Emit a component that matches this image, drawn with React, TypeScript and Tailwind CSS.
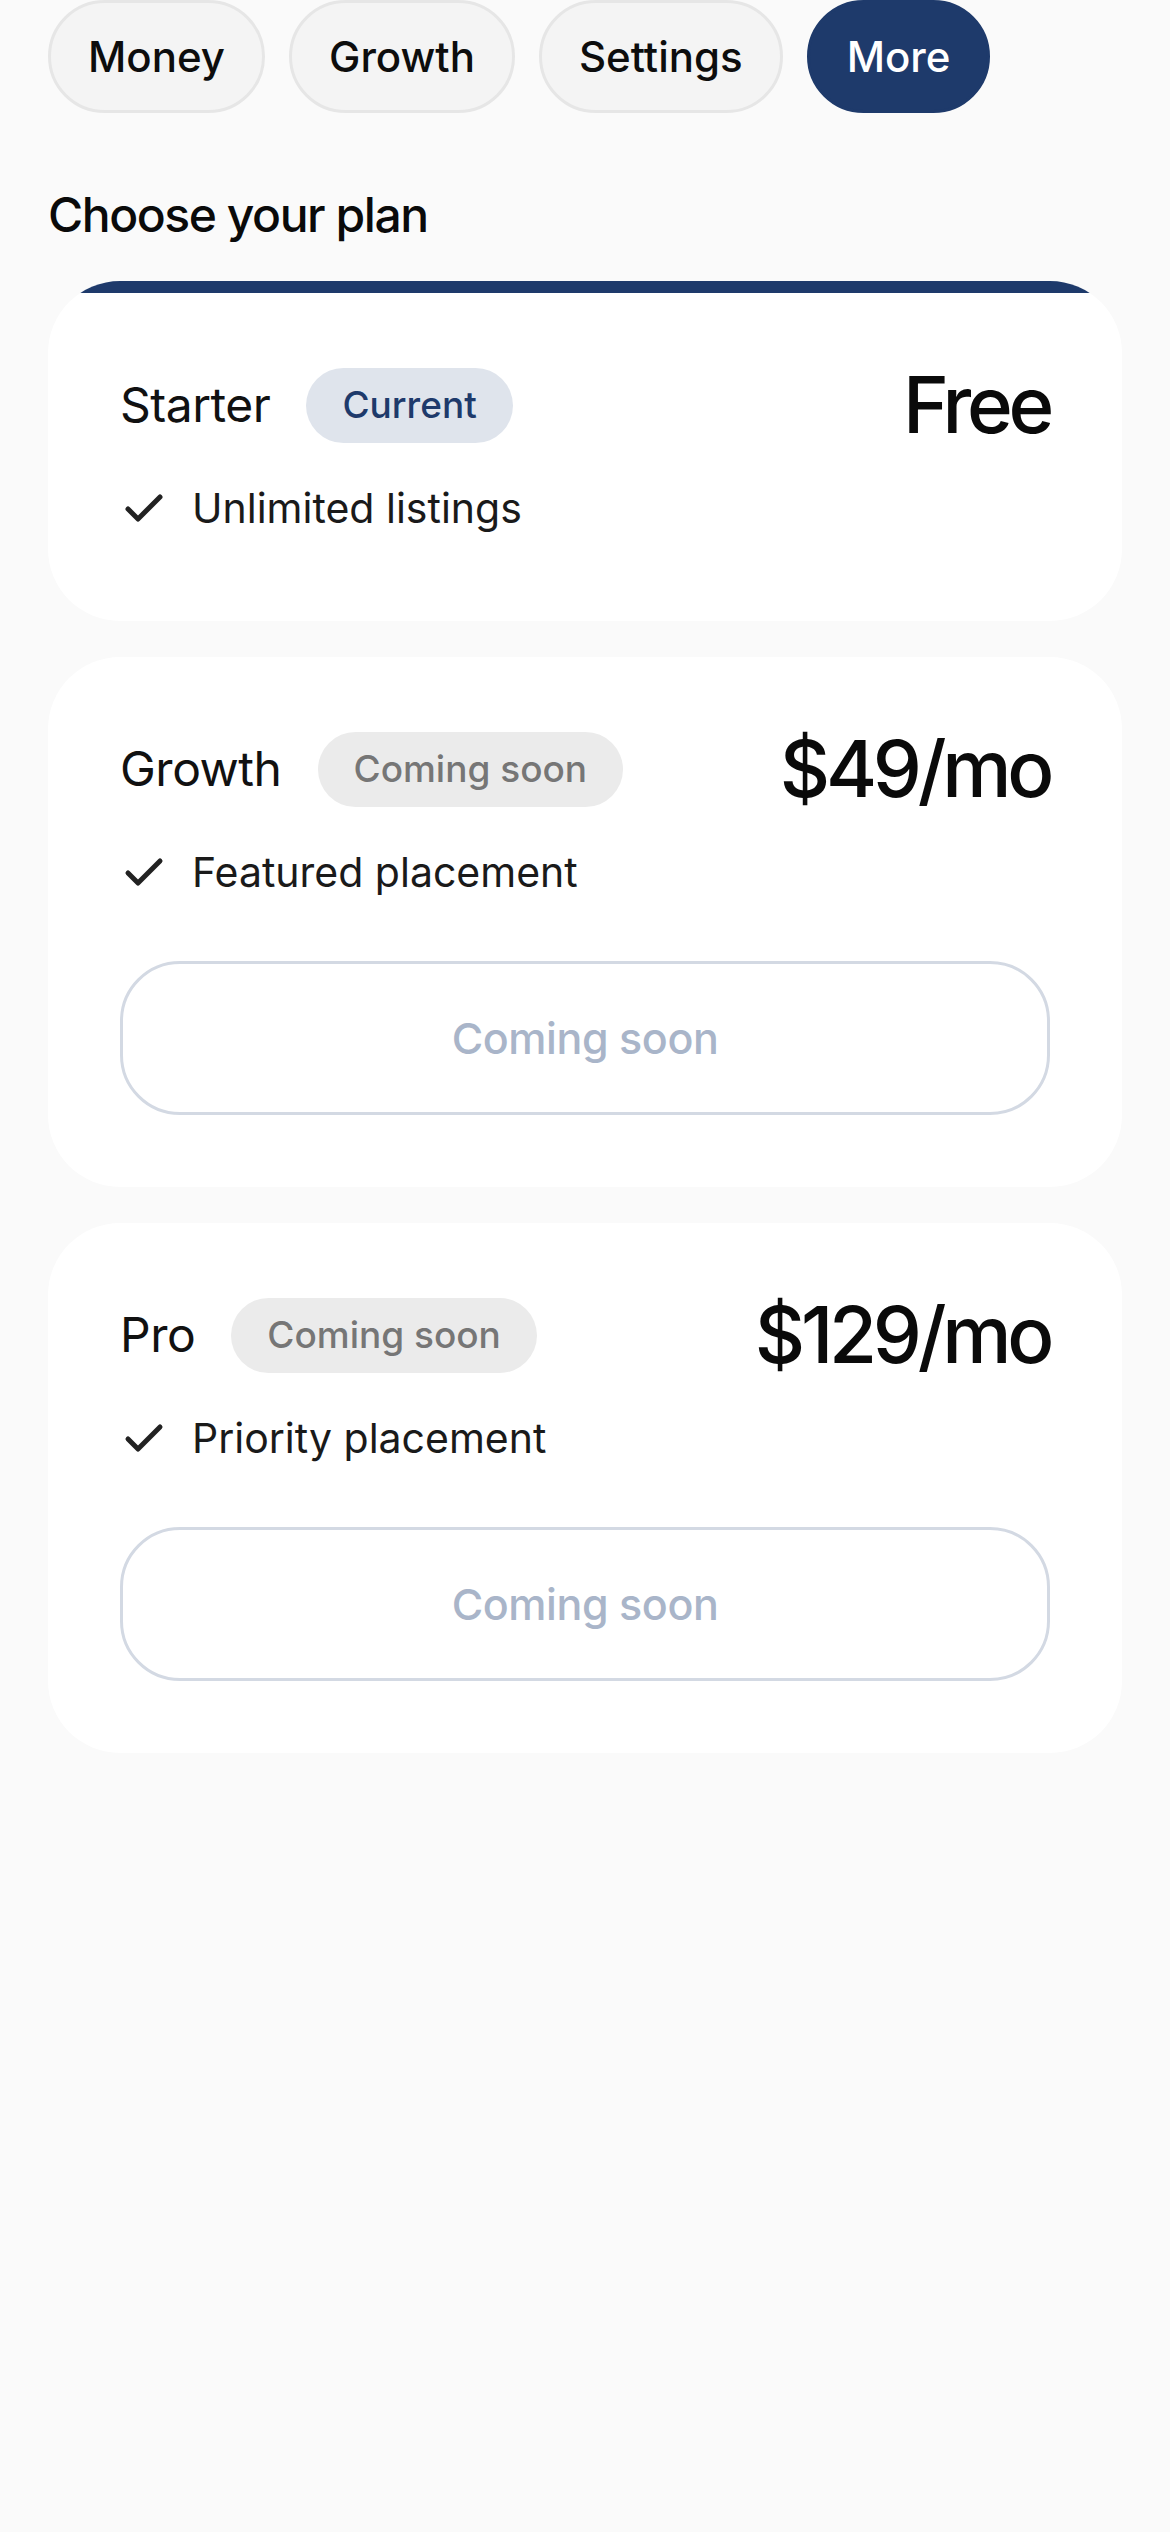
import React from "react";

const tabs = [
  { label: "Money", active: false },
  { label: "Growth", active: false },
  { label: "Settings", active: false },
  { label: "More", active: true },
];

function Check() {
  return (
    <svg width="48" height="48" viewBox="0 0 24 24" fill="none" stroke="#222222" strokeWidth="2.5" strokeLinecap="round" strokeLinejoin="round" className="shrink-0">
      <path d="M20 6 9 17l-5-5" />
    </svg>
  );
}

type Plan = {
  name: string;
  badge: string;
  current: boolean;
  price: string;
  feature: string;
};

const plans: Plan[] = [
  { name: "Starter", badge: "Current", current: true, price: "Free", feature: "Unlimited listings" },
  { name: "Growth", badge: "Coming soon", current: false, price: "$49/mo", feature: "Featured placement" },
  { name: "Pro", badge: "Coming soon", current: false, price: "$129/mo", feature: "Priority placement" },
];

function PlanCard({ plan }: { plan: Plan }) {
  return (
    <div className="overflow-hidden rounded-[72px] bg-white">
      {plan.current && <div className="h-[12px] bg-[#1e3a6b]" />}
      <div className="px-[72px] pt-[72px] pb-[72px]">
        <div className="flex h-[80px] items-center justify-between">
          <div className="flex items-center gap-[36px]">
            <span className="text-[48px] text-[#111111] tracking-[-0.01em]">{plan.name}</span>
            <span
              className={
                plan.current
                  ? "flex h-[75px] items-center rounded-full bg-[#dfe4ec] px-[36px] text-[37px] font-medium text-[#1e3a6b]"
                  : "flex h-[75px] items-center rounded-full bg-[#ebebeb] px-[36px] text-[37px] font-medium text-[#767676]"
              }
            >
              {plan.badge}
            </span>
          </div>
          <span className="text-[78px] leading-none font-medium tracking-[-0.055em] text-[#0a0a0a]">{plan.price}</span>
        </div>
        <div className="mt-[24px] flex h-[80px] items-center gap-[24px]">
          <Check />
          <span className="text-[41px] text-[#1a1a1a]">{plan.feature}</span>
        </div>
        {!plan.current && (
          <button className="mt-[48px] flex h-[154px] w-full items-center justify-center rounded-[60px] border-[3px] border-[#d3d9e3] bg-white text-[43px] font-medium tracking-[-0.01em] text-[#a9b5c9]">
            Coming soon
          </button>
        )}
      </div>
    </div>
  );
}

export default function App() {
  return (
    <div className="min-h-[2532px] w-[1170px] bg-[#fafafa] px-[48px] font-['Inter',sans-serif]">
      <div className="flex gap-[24px]">
        {tabs.map((t) => (
          <div
            key={t.label}
            className={
              t.active
                ? "flex h-[113px] items-center rounded-full border-[3px] border-[#1e3a6b] bg-[#1e3a6b] px-[37px] text-[42px] font-medium text-white"
                : "flex h-[113px] items-center rounded-full border-[3px] border-[#e6e6e6] bg-[#f4f4f4] px-[37px] text-[42px] font-medium text-[#0d0d0d]"
            }
          >
            {t.label}
          </div>
        ))}
      </div>
      <h1 className="mt-[66px] text-[48px] leading-[72px] font-medium tracking-[-0.03em] text-[#0a0a0a]">
        Choose your plan
      </h1>
      <div className="mt-[30px] flex flex-col gap-[36px]">
        {plans.map((p) => (
          <PlanCard key={p.name} plan={p} />
        ))}
      </div>
    </div>
  );
}
